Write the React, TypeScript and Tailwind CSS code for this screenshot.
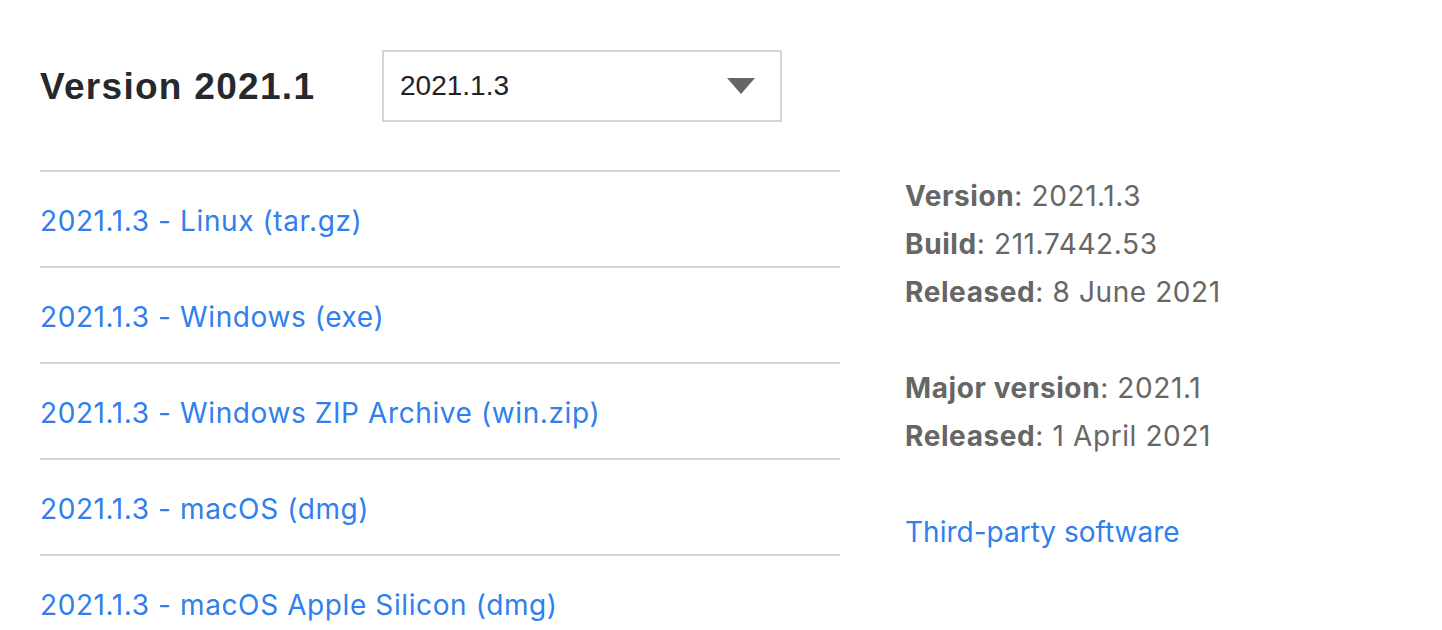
import { useState } from 'react'

const downloads = [
  '2021.1.3 - Linux (tar.gz)',
  '2021.1.3 - Windows (exe)',
  '2021.1.3 - Windows ZIP Archive (win.zip)',
  '2021.1.3 - macOS (dmg)',
  '2021.1.3 - macOS Apple Silicon (dmg)',
]

function Info({ label, value }: { label: string; value: string }) {
  return (
    <div>
      <span className="font-bold">{label}</span>: {value}
    </div>
  )
}

export default function App() {
  const [release] = useState('2021.1.3')

  return (
    <div className="bg-white min-h-screen pl-10 pt-[50px] text-[#222]">
      {/* Header */}
      <div className="flex items-center">
        <h2 className="w-[342px] font-['Liberation_Sans',Arial,sans-serif] font-bold text-[37px] leading-none tracking-[1.3px] text-[#27282c]">
          Version 2021.1
        </h2>
        <div className="flex items-center justify-between w-[400px] h-[72px] border-2 border-[#d5d5d5] pl-4 pr-[25px] font-['Liberation_Sans',Arial,sans-serif] text-[28px] text-[#222]">
          <span>{release}</span>
          <svg width="28" height="16" viewBox="0 0 28 16">
            <path d="M0 0 L28 0 L14 16 Z" fill="#666" />
          </svg>
        </div>
      </div>

      <div className="flex mt-12 font-['Inter',sans-serif] tracking-[0.6px]">
        {/* Download list */}
        <div className="w-[800px]">
          {downloads.map((d) => (
            <div key={d} className="h-24 border-t-2 border-[#d5d5d5] flex items-center pt-1">
              <a href="#" className="text-[#2f80ed] text-[28px]">
                {d}
              </a>
            </div>
          ))}
        </div>

        {/* Build info */}
        <div className="ml-[65px] text-[28px] leading-[48px] text-[#666] pt-0.5">
          <Info label="Version" value="2021.1.3" />
          <Info label="Build" value="211.7442.53" />
          <Info label="Released" value="8 June 2021" />
          <div className="mt-12">
            <Info label="Major version" value="2021.1" />
            <Info label="Released" value="1 April 2021" />
          </div>
          <div className="mt-12">
            <a href="#" className="text-[#2f80ed] tracking-normal">
              Third-party software
            </a>
          </div>
        </div>
      </div>
    </div>
  )
}
